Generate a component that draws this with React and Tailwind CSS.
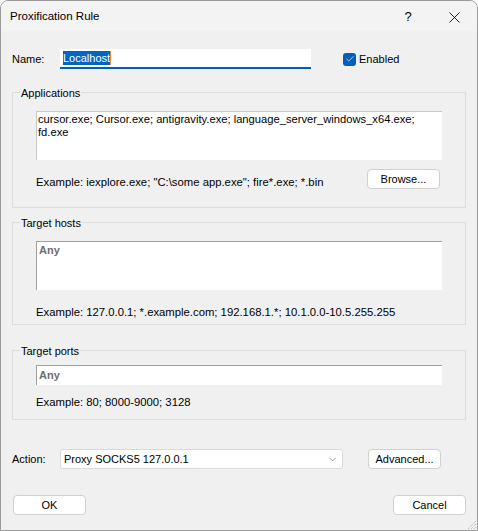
import { Check, ChevronDown, X } from "lucide-react";

function Group({ title, className = "", children }) {
  return (
    <div className={"relative border border-[#dcdcdc] " + className}>
      <span className="absolute -top-[7px] left-[7px] bg-[#f0f0f0] px-[1px] leading-[14px]">{title}</span>
      {children}
    </div>
  );
}

function Button({ children, className = "" }) {
  return (
    <div
      className={
        "flex h-[20px] w-[73px] items-center justify-center rounded-[4px] border border-[#d0d0d0] bg-white leading-[14px] " +
        className
      }
    >
      {children}
    </div>
  );
}

export default function App() {
  return (
    <div className="relative flex h-[531px] w-[478px] flex-col overflow-hidden rounded-t-[8px] border border-[#9a9a9a] bg-[#f0f0f0] font-['Liberation_Sans',Arial,sans-serif] text-[11px] text-black">
      {/* title bar */}
      <div className="flex h-[30px] shrink-0 items-center bg-[#f3f3f3] pl-[9px] pt-[2px]">
        <span className="text-[11.5px]">Proxification Rule</span>
        <div className="ml-auto flex h-full w-[46px] items-center justify-center text-[13px]">?</div>
        <div className="flex h-full w-[46px] items-center justify-center">
          <X size={19} strokeWidth={1.1} />
        </div>
      </div>

      <div className="flex flex-col px-[11px]">
        {/* name */}
        <div className="mt-[18px] flex h-[20px] items-center">
          <span className="w-[48px]">Name:</span>
          <div className="flex h-[20px] w-[251px] items-center border-b-2 border-[#005fb8] bg-white pl-[3px]">
            <span className="border-r border-[#e0904a] bg-[#0067c0] leading-[14px] text-white">Localhost</span>
          </div>
          <div className="ml-[32px] flex h-[13px] w-[13px] items-center justify-center rounded-[3px] bg-[#005fb8]">
            <Check size={10} strokeWidth={1.6} className="text-white" />
          </div>
          <span className="ml-[3px]">Enabled</span>
        </div>

        {/* applications */}
        <Group title="Applications" className="mt-[23px] px-[23px] pt-[18px] pb-[18px]">
          <div className="h-[49px] border-t border-l border-[#c8c8c8] bg-white pl-[1px] pt-[1px] text-[11.2px] leading-[13px]">
            cursor.exe; Cursor.exe; antigravity.exe; language_server_windows_x64.exe;
            <br />
            fd.exe
          </div>
          <div className="mt-[9px] flex h-[20px] items-end justify-between">
            <span className="text-[11.3px] leading-[14px]">Example: iexplore.exe; "C:\some app.exe"; fire*.exe; *.bin</span>
            <Button className="mr-[2px]">Browse...</Button>
          </div>
        </Group>

        {/* target hosts */}
        <Group title="Target hosts" className="mt-[14px] px-[23px] pt-[18px] pb-[5px]">
          <div className="h-[49px] border-t border-l border-[#a0a0a0] bg-white pl-[2px] pt-[1px] font-bold leading-[14px] text-[#6d6d6d]">
            Any
          </div>
          <div className="mt-[15px] text-[11.3px] leading-[14px]">
            Example: 127.0.0.1; *.example.com; 192.168.1.*; 10.1.0.0-10.5.255.255
          </div>
        </Group>

        {/* target ports */}
        <Group title="Target ports" className="mt-[25px] px-[23px] pt-[14px] pb-[10px]">
          <div className="h-[20px] border-t border-l border-[#a0a0a0] bg-white pl-[2px] font-bold leading-[18px] text-[#6d6d6d]">
            Any
          </div>
          <div className="mt-[10px] text-[11.3px] leading-[14px]">Example: 80; 8000-9000; 3128</div>
        </Group>

        {/* action */}
        <div className="mt-[29px] flex h-[20px] items-center">
          <span className="w-[48px]">Action:</span>
          <div className="flex h-[20px] w-[283px] items-center rounded-[3px] border border-[#d9d9d9] bg-white pl-[3px] pr-[4px]">
            <span className="leading-[14px]">Proxy SOCKS5 127.0.0.1</span>
            <ChevronDown size={11} strokeWidth={1.2} className="ml-auto text-[#555]" />
          </div>
          <Button className="ml-[25px]">Advanced...</Button>
        </div>

        {/* buttons */}
        <div className="mt-[26px] flex h-[20px] items-center">
          <Button className="ml-[1px] border-[#0067c0]">OK</Button>
          <Button className="ml-auto w-[72px]">Cancel</Button>
        </div>
      </div>

      {/* resize grip */}
      <svg className="absolute right-0 bottom-0" width="11" height="11" viewBox="0 0 11 11">
        <path d="M10 2 L2 10 M10 5 L5 10 M10 8 L8 10" stroke="#b0b0b0" strokeWidth="1" strokeDasharray="1 1" />
      </svg>
    </div>
  );
}
